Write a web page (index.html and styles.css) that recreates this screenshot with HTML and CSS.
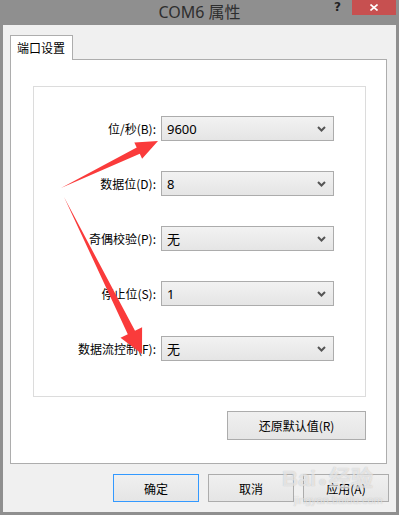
FILE: index.html
```html
<!DOCTYPE html>
<html lang="zh-CN">
<head>
    <meta charset="UTF-8">
    <meta name="viewport" content="width=device-width, initial-scale=1.0">
    <title>COM6 属性</title>
    <link rel="stylesheet" href="styles.css">
</head>
<body>
    <div id="window">
        <div class="titlebar">
            <span></span>
            <span class="title">COM6 属性</span>
            <div class="controls">
                <span class="help">?</span>
                <span class="close">
                    <svg width="8" height="7" viewBox="0 0 8 7"><path d="M0.5 0.5 L7.5 6.5 M7.5 0.5 L0.5 6.5" stroke="#fff" stroke-width="1.6"/></svg>
                </span>
            </div>
        </div>
        <div class="frame">
            <div class="dialog">
                <div class="tab">端口设置</div>
                <div class="panel">
                    <div class="group">
                        <div class="row">
                            <label class="label">位/秒(B):</label>
                            <div class="select"><span>9600</span><svg class="chev" width="9" height="6" viewBox="0 0 9 6"><path d="M1 1 L4.5 4.5 L8 1" fill="none" stroke="#555" stroke-width="2"/></svg></div>
                        </div>
                        <div class="row">
                            <label class="label">数据位(D):</label>
                            <div class="select"><span>8</span><svg class="chev" width="9" height="6" viewBox="0 0 9 6"><path d="M1 1 L4.5 4.5 L8 1" fill="none" stroke="#555" stroke-width="2"/></svg></div>
                        </div>
                        <div class="row">
                            <label class="label">奇偶校验(P):</label>
                            <div class="select"><span>无</span><svg class="chev" width="9" height="6" viewBox="0 0 9 6"><path d="M1 1 L4.5 4.5 L8 1" fill="none" stroke="#555" stroke-width="2"/></svg></div>
                        </div>
                        <div class="row">
                            <label class="label">停止位(S):</label>
                            <div class="select"><span>1</span><svg class="chev" width="9" height="6" viewBox="0 0 9 6"><path d="M1 1 L4.5 4.5 L8 1" fill="none" stroke="#555" stroke-width="2"/></svg></div>
                        </div>
                        <div class="row">
                            <label class="label">数据流控制(F):</label>
                            <div class="select"><span>无</span><svg class="chev" width="9" height="6" viewBox="0 0 9 6"><path d="M1 1 L4.5 4.5 L8 1" fill="none" stroke="#555" stroke-width="2"/></svg></div>
                        </div>
                    </div>
                    <div class="restore-row">
                        <button class="btn restore">还原默认值(R)</button>
                    </div>
                </div>
                <div class="actions">
                    <button class="btn default">确定</button>
                    <button class="btn">取消</button>
                    <button class="btn">应用(A)</button>
                </div>
            </div>
        </div>

        <!-- red annotation arrows drawn over the dialog -->
        <svg class="arrows" width="399" height="515" viewBox="0 0 399 515">
            <polygon points="61,188 136.7,147.6 134.3,142.5 158,141 142.1,158.7 139.8,153.8" fill="#fa3b3b"/>
            <polygon points="64,197 135,330.8 142.1,327.2 142,354 120.5,337.8 127.8,334.2" fill="#fa3b3b"/>
        </svg>

        <div class="watermark">
            <div class="wm-top">Bai<span class="paw">●</span>经验</div>
            <div class="wm-url">jingyan.baidu.com</div>
        </div>
    </div>
</body>
</html>
```

FILE: styles.css
```css
body {
    margin: 0;
    padding: 0;
    font-family: "Noto Sans CJK SC", "Noto Sans", sans-serif;
    font-size: 12px;
    color: #000;
    background-color: #8f8f8f;
}
#window {
    position: relative;
    width: 399px;
    height: 515px;
    background-color: #8f8f8f;
    overflow: hidden;
}
.titlebar {
    display: grid;
    grid-template-columns: 1fr auto 1fr;
    height: 25px;
}
.title {
    font-size: 16px;
    line-height: 25px;
    color: #2e2e2e;
    font-family: "Noto Sans", "Noto Sans CJK SC", sans-serif;
}
.controls {
    display: flex;
    justify-content: flex-end;
    align-items: flex-start;
    padding-right: 3px;
}
.help {
    font-family: "DejaVu Sans", sans-serif;
    font-weight: bold;
    font-size: 12px;
    line-height: 13px;
    color: #222;
    margin-top: 1px;
    margin-right: 11px;
}
.close {
    display: flex;
    align-items: center;
    justify-content: center;
    width: 44px;
    height: 15px;
    background-color: #c75050;
}
.frame {
    padding: 0 3px 3px 3px;
}
.dialog {
    height: 487px;
    background-color: #f0f0f0;
    padding: 10px 7px 0 7px;
    box-sizing: border-box;
}
.tab {
    position: relative;
    z-index: 1;
    width: 63px;
    height: 25px;
    box-sizing: border-box;
    margin-bottom: -1px;
    padding-left: 6px;
    line-height: 23px;
    background-color: #fff;
    border: 1px solid #adadad;
    border-bottom: none;
}
.panel {
    width: 377px;
    height: 405px;
    box-sizing: border-box;
    background-color: #fff;
    border: 1px solid #adadad;
    padding: 26px 0 0 22px;
}
.group {
    width: 333px;
    height: 311px;
    box-sizing: border-box;
    border: 1px solid #dcdcdc;
    padding-top: 29px;
    display: flex;
    flex-direction: column;
    gap: 30px;
}
.row {
    display: flex;
    align-items: center;
}
.label {
    width: 122px;
    margin-right: 5px;
    text-align: right;
    white-space: nowrap;
}
.select {
    display: flex;
    align-items: center;
    justify-content: space-between;
    width: 173px;
    height: 25px;
    box-sizing: border-box;
    padding: 0 7px 0 5px;
    border: 1px solid #acacac;
    background: linear-gradient(#f2f2f2, #e5e5e5);
    font-family: "Noto Sans", "Noto Sans CJK SC", sans-serif;
    font-size: 13px;
}
.restore-row {
    display: flex;
    justify-content: flex-end;
    width: 333px;
    margin-top: 14px;
}
.btn {
    font-family: "Noto Sans CJK SC", "Noto Sans", sans-serif;
    font-size: 12px;
    color: #000;
    border: 1px solid #acacac;
    background: linear-gradient(#f0f0f0, #e5e5e5);
    padding: 0;
    margin: 0;
}
.restore {
    width: 139px;
    height: 29px;
}
.actions {
    display: flex;
    justify-content: flex-end;
    gap: 9px;
    margin-top: 10px;
}
.actions .btn {
    width: 86px;
    height: 28px;
}
.actions .default {
    border-color: #3399ff;
}
.arrows {
    position: absolute;
    left: 0;
    top: 0;
    pointer-events: none;
}
.watermark {
    position: absolute;
    left: 282px;
    top: 466px;
    color: rgba(255, 255, 255, 0.6);
    text-shadow: 0 0 1px rgba(120, 120, 120, 0.45);
    pointer-events: none;
}
.wm-top {
    font-family: "Liberation Sans", sans-serif;
    font-size: 22px;
    font-weight: bold;
    line-height: 26px;
}
.paw {
    font-size: 14px;
    margin: 0 2px;
}
.wm-url {
    font-family: "Liberation Sans", sans-serif;
    font-size: 11px;
    line-height: 12px;
    margin-left: 12px;
}
```
